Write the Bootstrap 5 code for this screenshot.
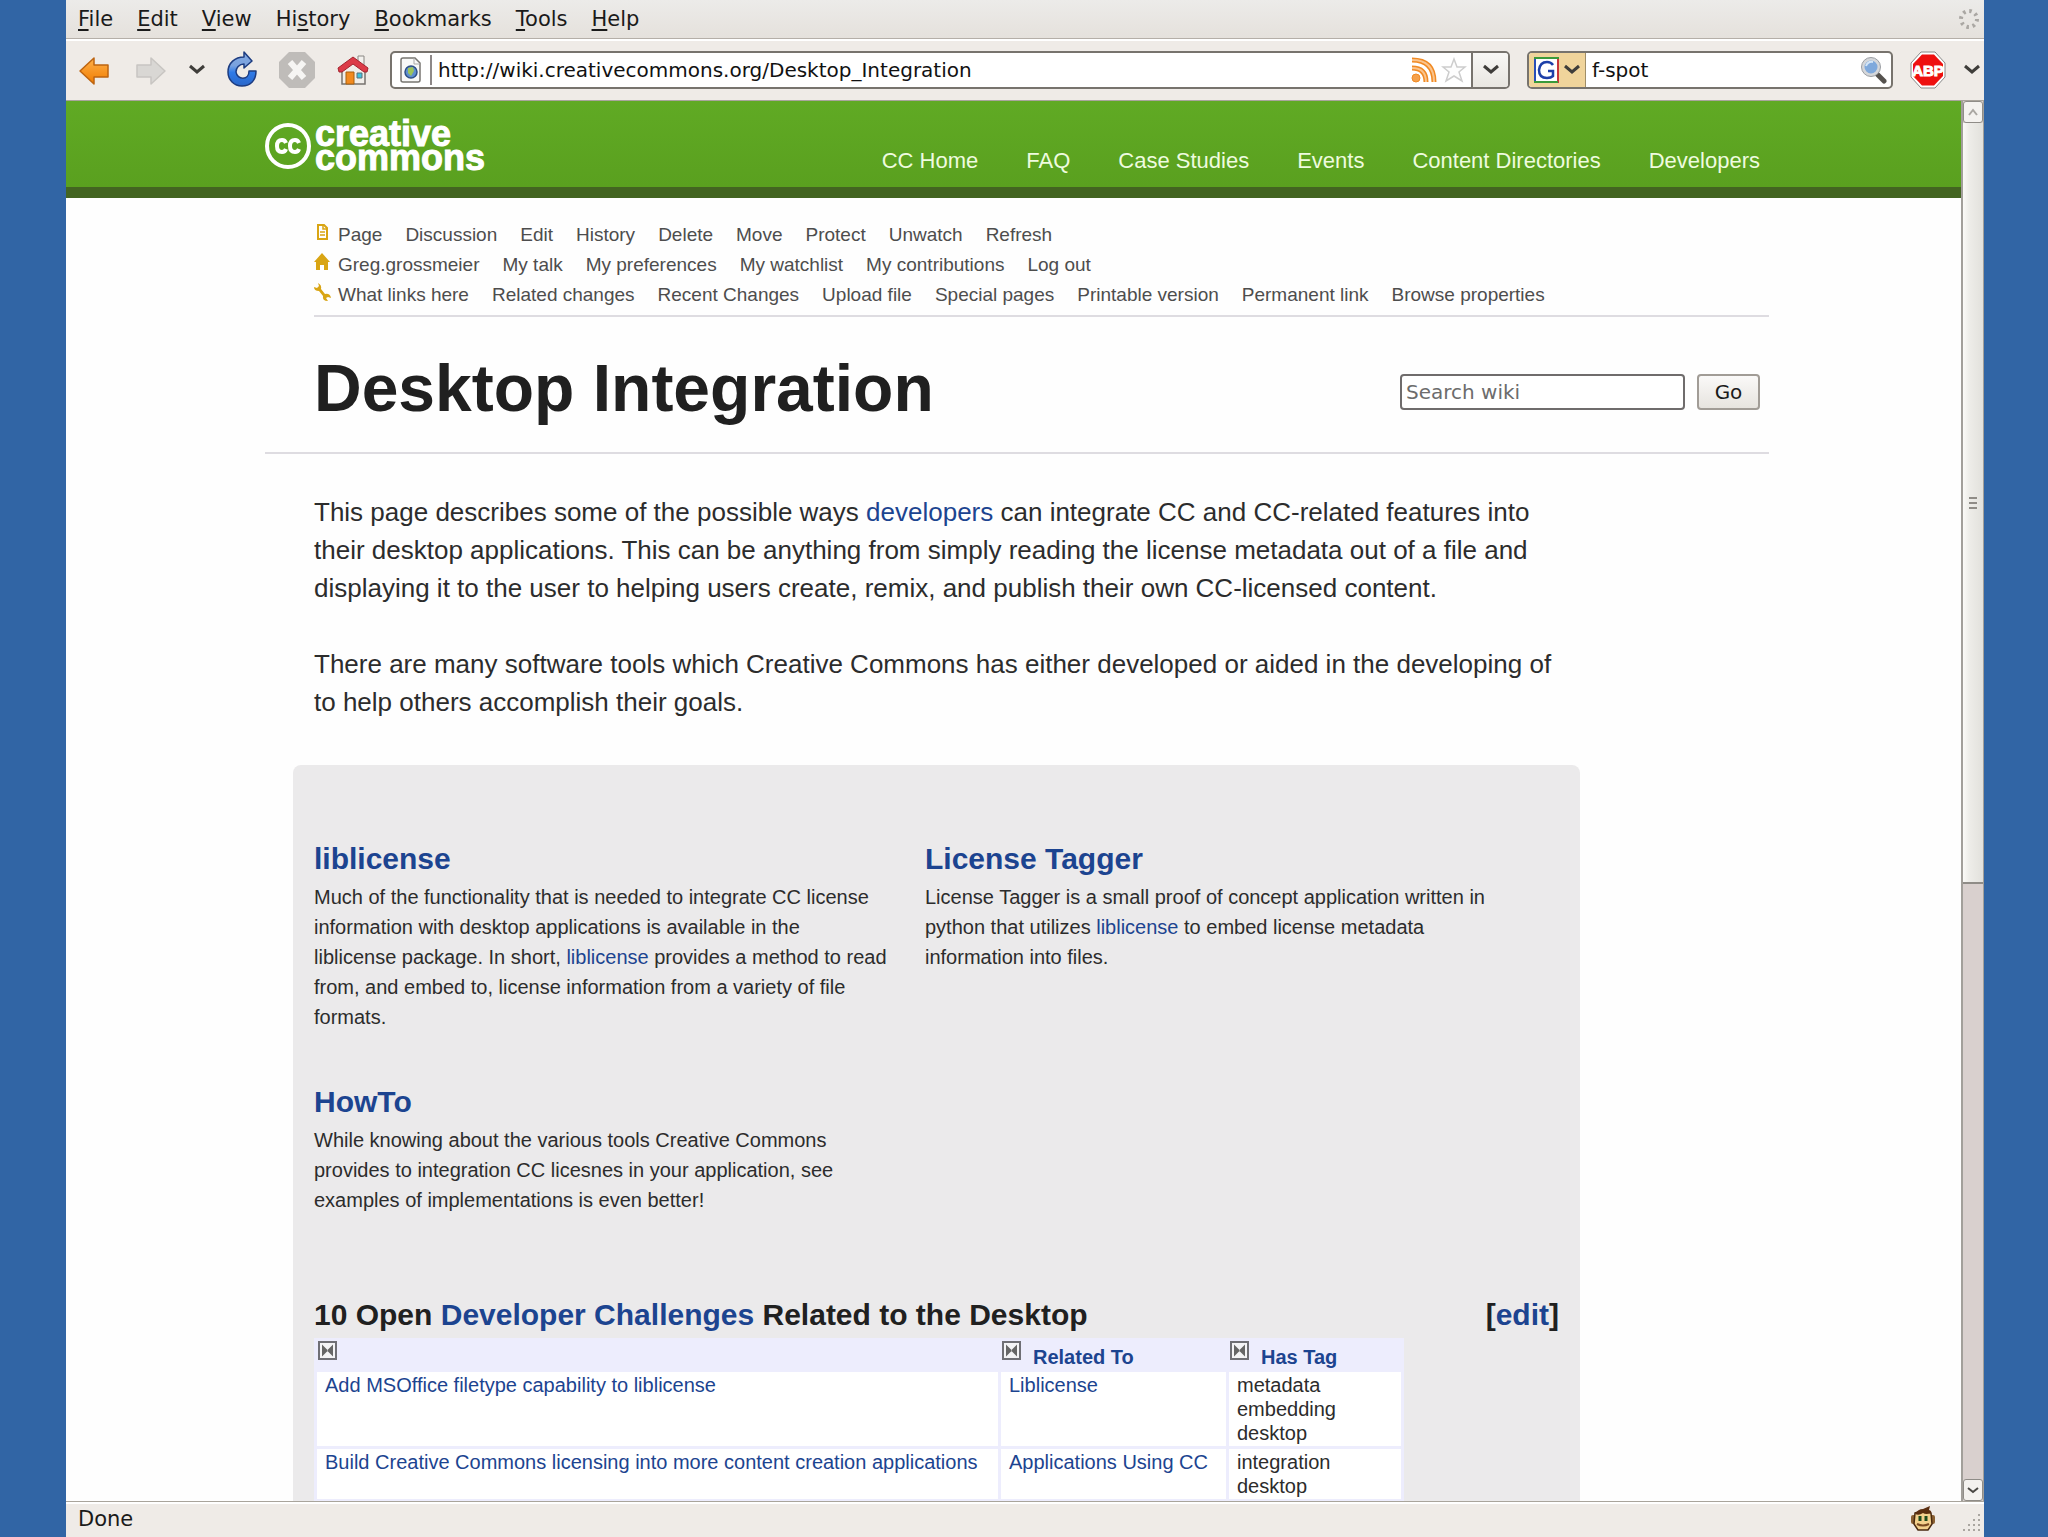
<!DOCTYPE html>
<html lang="en">
<head>
<meta charset="utf-8">
<meta name="viewport" content="width=device-width, initial-scale=1">
<title>Desktop Integration - CC Wiki</title>
<link href="https://cdn.jsdelivr.net/npm/bootstrap@5.3.0/dist/css/bootstrap.min.css" rel="stylesheet">
<style>
body{background:#3165a5;font-family:"Liberation Sans",Arial,sans-serif;color:#222;padding:0 64px 0 66px}
a{text-decoration:none;color:#1c4490}
button{border:0;background:none;padding:0;line-height:0}
svg{display:block;flex:none}
.ui-font{font-family:"DejaVu Sans",sans-serif;font-size:21px;line-height:24px;color:#1a1a1a}
.browser{background:#efebe7}
.menubar{height:38px;gap:24px;padding:0 4px 0 12px;background:linear-gradient(#ecebe9,#e5e1dc)}
.menubar button{line-height:24px;color:inherit}
.menubar u{text-underline-offset:3px}
.toolbar{height:63px;gap:20px;padding:0 3px 0 10px;border-top:1px solid #b5afa8;border-bottom:1px solid #a9a49c;box-shadow:inset 0 2px #fff}
.tool-end{gap:17px}
.field{height:38px;background:#fff;border:2px solid #77736d;border-radius:5px;overflow:hidden}
.field input{border:0;outline:0;background:none;min-width:0;color:#111;font-size:20px;padding:0 6px}
.site-id{width:40px;height:30px;border-right:2px solid #8d8888;padding-left:8px}
.drop{width:37px;border-left:2px solid #77736d;background:linear-gradient(#f8f7f5,#e9e6e1)}
.finder{width:366px}
.engine{width:57px;gap:4px;background:#f0d49b;border-right:1px solid #a08e68}
.viewport{min-height:0}
.wiki{background:#fefefe;overflow:hidden;min-width:0}
.banner{background:linear-gradient(#60aa24,#5aa01f);border-bottom:11px solid #436421;padding-left:7px}
.wrapper{max-width:1504px;margin:0 auto}
.banner .wrapper{height:86px}
.logo{gap:4px;color:#fff}
.logo-text{font-size:36px;line-height:24px;font-weight:700;-webkit-text-stroke:1px #fff}
.site-nav{gap:48px;font-size:22px;line-height:24px;padding:0 9px 14px 0}
.site-nav a{color:#eefbdf}
.body-area{padding-left:7px}
.actions{margin-left:49px;padding:22px 0 5px;border-bottom:2px solid #dedce1;font-size:19px;line-height:30px}
.actions ul{gap:23px}
.actions a{color:#4d4d4d}
.actions svg{margin-bottom:6px}
.actions .lead-icon{gap:8px}
.heading{padding:38px 9px 31px 49px;border-bottom:2px solid #dedce1}
.heading h1{font-size:66px;line-height:66px;font-weight:700;color:#202020}
.heading form{gap:12px}
.heading input{width:285px;height:36px;border:2px solid #6f6c6c;border-radius:4px;padding:0 4px;font-size:20px;background:#fff}
.heading input::placeholder{color:#6c6c6c;opacity:1}
.heading button{width:63px;height:36px;border:2px solid #a19c96;border-radius:4px;background:linear-gradient(#faf9f8,#e7e4df);font-size:20px}
.intro{padding:39px 0 44px 49px;max-width:1295px;font-size:26px;line-height:38px;color:#2c2c2c}
.intro p{margin:0 0 38px}
.intro p:last-child{margin:0}
.panel{margin:0 189px 0 28px;padding:76px 21px 40px;background:#ebeaeb;border-radius:8px 8px 0 0}
.panel h2,.panel h3{font-size:30px;line-height:36px;font-weight:700;margin:0 0 5px;color:#202020}
.tools-list{display:grid;grid-template-columns:588px 1fr;gap:52px 23px;font-size:20px;line-height:30px;color:#2c2c2c;margin-bottom:82px;padding-right:46px}
.tools-list p{margin:0}
.challenges{border-collapse:separate;border-spacing:3px;background:#ededfd;width:1090px;font-size:20px;line-height:24px;color:#2c2c2c}
.challenges th{padding:0 1px;vertical-align:top}
.challenges td{background:#fff;padding:1px 8px;vertical-align:top}
.sorter{gap:12px;height:28px}
.sorter a{padding-top:4px}
.scroll{width:23px;background:#d9d0ce;border-left:2px solid #a29f9a;border-right:1px solid #a29f9a}
.scroll button{height:22px;width:100%;border:1px solid #8f8c87;border-radius:3px;background:#f4f2ef}
.thumb{flex:759 0 0;background:linear-gradient(90deg,#fbfaf7,#eeede9 30%,#e2e1dc);border-bottom:2px solid #8f8c87}
.trough{flex:595 0 0}
.status{height:36px;border-top:1px solid #a9a49c;box-shadow:inset 0 2px #fff;padding:0 3px 2px 12px}
</style>
<script src="https://cdn.jsdelivr.net/npm/bootstrap@5.3.0/dist/js/bootstrap.bundle.min.js"></script>
</head>
<body>
<svg width="0" height="0" class="position-absolute" aria-hidden="true">
<defs>
<linearGradient id="or" x2="0" y2="1"><stop stop-color="#ffb04a"/><stop offset="1" stop-color="#f07c00"/></linearGradient>
<linearGradient id="bl" x2="0" y2="1"><stop stop-color="#84aae2"/><stop offset=".4" stop-color="#7aa2de"/><stop offset=".6" stop-color="#2f7be8"/><stop offset="1" stop-color="#2a66c8"/></linearGradient>
<symbol id="chev" viewBox="0 0 18 18"><path d="M2 5l7 6 7-6" fill="none" stroke="#3f3d3a" stroke-width="3"/></symbol>
<symbol id="sort" viewBox="0 0 19 19"><path d="M1 1h17v17H1z" fill="#f4f4f6" stroke="#6f6f75" stroke-width="2"/><path d="M4 3.500l6 6-6 6zM15 3.500l-6 6 6 6z" fill="#666"/></symbol>
</defs></svg>
<div class="browser d-flex flex-column vh-100">
  <div class="menubar ui-font d-flex align-items-center flex-shrink-0">
    <button><u>F</u>ile</button><button><u>E</u>dit</button><button><u>V</u>iew</button><button>Hi<u>s</u>tory</button><button><u>B</u>ookmarks</button><button><u>T</u>ools</button><button><u>H</u>elp</button>
    <svg class="ms-auto" width="22" height="22" viewBox="0 0 22 22" fill="none"><circle cx="11" cy="11" r="8" stroke="#aaa7a3" stroke-width="4" stroke-dasharray="2.500 3.783"/></svg>
  </div>
  <div class="toolbar d-flex align-items-center flex-shrink-0">
    <button aria-label="Back"><svg width="36" height="36" viewBox="0 0 36 36"><path d="M4 19L18 6v7h14v12H18v7z" fill="url(#or)" stroke="#bd6410" stroke-width="1.500" stroke-linejoin="round"/></svg></button>
    <button aria-label="Forward"><svg width="36" height="36" viewBox="0 0 36 36"><path d="M33 19L19 6v7H5v12h14v7z" fill="#d9d7d4" stroke="#c8c5c2" stroke-width="1.500" stroke-linejoin="round"/></svg></button>
    <button aria-label="Recent pages"><svg width="18" height="20"><use href="#chev"/></svg></button>
    <button aria-label="Reload"><svg width="32" height="38" viewBox="0 0 32 38"><path d="M18 1l8 9-8 7v-4c-5 0-8 4-8 8 1 8 13 9 13-1h7c0 10-6 15-14 15C8 35 2 29 2 21 2 12 9 6 18 6z" fill="url(#bl)" stroke="#1d3c80" stroke-width="1.500" stroke-linejoin="round"/></svg></button>
    <button aria-label="Stop"><svg width="38" height="38" viewBox="0 0 38 38"><path d="M11 1h16l10 10v16L27 37H11L1 27V11z" fill="#bfbcb9"/><path d="M12 11l14 16M26 11L12 27" stroke="#f6f5f3" stroke-width="6"/></svg></button>
    <button aria-label="Home"><svg width="34" height="36" viewBox="0 0 34 36"><path d="M22 4h6v11h-6z" fill="#f3f1ee" stroke="#8b8884"/><path d="M6 15l11-8 12 8v17H6z" fill="#f1eeea" stroke="#77736f" stroke-width="1.500"/><path d="M2 16L17 5l15 11-1 4h-3L17 12 6 20H3z" fill="#dc3b48" stroke="#a4242f" stroke-linejoin="round"/><path d="M10 20h8v12h-8z" fill="#f28a1f" stroke="#a8600f"/><path d="M21 21h5v5h-5z" fill="#3fc3de" stroke="#5a6f78"/></svg></button>
    <div class="tool-end d-flex align-items-center flex-grow-1">
      <div class="field d-flex align-items-center flex-grow-1">
        <div class="site-id d-flex align-items-center"><svg width="22" height="26" viewBox="0 0 22 26"><path d="M3 1h12l5 5v17q0 2-2 2H3q-2 0-2-2V3q0-2 2-2z" fill="#f8f8f7" stroke="#777570" stroke-width="1.500"/><path d="M14 1v6h6" fill="none" stroke="#aaa"/><circle cx="11" cy="15" r="6" fill="#5f8fd0" stroke="#2d4f86" stroke-width="1.500"/><path d="M8 11l5-1 1 4-3 5-3-3z" fill="#9cc45a"/></svg></div>
        <input class="ui-font flex-grow-1" aria-label="Address" value="http://wiki.creativecommons.org/Desktop_Integration">
        <svg class="me-1" width="26" height="26" viewBox="0 0 26 26" fill="none" stroke="#f08a24"><circle cx="5" cy="21" r="4" fill="#f5a04a"/><path d="M1 11q14 0 14 14M1 3q22 0 22 22" stroke-width="5"/><path d="M1 11q14 0 14 14M1 3q22 0 22 22" stroke-width="2" stroke="#fbc48c"/></svg>
        <svg class="me-1" width="26" height="26" viewBox="0 0 26 26"><path d="M13 2l3 8h8l-6 5 3 9-8-5-8 5 3-9-6-5h8z" fill="#fdfdfd" stroke="#cdcdcd" stroke-width="1.500"/></svg>
        <button class="drop h-100 d-flex align-items-center justify-content-center" aria-label="History list"><svg width="18" height="18"><use href="#chev"/></svg></button>
      </div>
      <div class="field finder d-flex align-items-center">
        <button class="engine h-100 d-flex align-items-center justify-content-center" aria-label="Search engine"><svg width="25" height="26" viewBox="0 0 25 26"><path d="M1 1h23v24H1z" fill="#fff"/><path d="M1 25V1" stroke="#2a4fb8" stroke-width="2"/><path d="M0 1h25" stroke="#3a9a3a" stroke-width="2"/><path d="M24 2v24" stroke="#c8373a" stroke-width="2"/><path d="M0 25h24" stroke="#3a9a3a" stroke-width="2"/><path d="M19 8Q17 5 13 5 6 5 5 13q0 8 8 8 4 0 6-2v-5h-5" fill="none" stroke="#1d3fa8" stroke-width="2.500"/></svg><svg width="18" height="18"><use href="#chev"/></svg></button>
        <input class="ui-font flex-grow-1" aria-label="Web search" value="f-spot">
        <button class="me-1" aria-label="Search"><svg width="26" height="28" viewBox="0 0 26 28"><path d="M15 17l8 8" stroke="#55524e" stroke-width="5" stroke-linecap="round"/><circle cx="10" cy="11" r="8" fill="#7fa9dc" stroke="#d5d7da" stroke-width="3"/><circle cx="10" cy="11" r="9.500" fill="none" stroke="#9a9da2"/><path d="M5 10q2-5 7-4" stroke="#d5e6f7" stroke-width="2" fill="none"/></svg></button>
      </div>
      <button aria-label="Adblock Plus"><svg width="36" height="38" viewBox="0 0 36 38"><path d="M11 1h14l10 11v14L25 37H11L1 26V12z" fill="#fff" stroke="#888"/><path d="M12 3.500h12l9 9.500v12l-9 9.500H12L3 25V13z" fill="#ee1010"/><text x="18" y="25" text-anchor="middle" font-family="Liberation Sans" font-weight="700" font-size="15" fill="#fff" stroke="#fff">ABP</text></svg></button>
      <button aria-label="Adblock menu"><svg width="18" height="18"><use href="#chev"/></svg></button>
    </div>
  </div>

  <div class="viewport d-flex flex-grow-1">
    <div class="wiki flex-grow-1">
      <header class="banner">
        <div class="wrapper d-flex justify-content-between align-items-end">
          <a class="logo d-flex align-items-center align-self-center pt-1" href="#">
            <svg width="46" height="48" viewBox="0 0 46 48"><circle cx="23" cy="24" r="21" fill="none" stroke="#fff" stroke-width="4"/><path d="M21 21q-1-3-4-3-5 0-5 6t5 6q3 0 4-3M34 21q-1-3-4-3-5 0-5 6t5 6q3 0 4-3" fill="none" stroke="#fff" stroke-width="4"/></svg>
            <span class="logo-text">creative<br>commons</span>
          </a>
          <nav class="site-nav d-flex"><a href="#">CC Home</a><a href="#">FAQ</a><a href="#">Case Studies</a><a href="#">Events</a><a href="#">Content Directories</a><a href="#">Developers</a></nav>
        </div>
      </header>
      <div class="body-area"><div class="wrapper">
        <nav class="actions">
          <ul class="list-unstyled d-flex m-0">
            <li class="lead-icon d-flex align-items-center"><svg width="16" height="18" viewBox="0 0 16 18"><path d="M4 2h6l3 3v11H4z" fill="#fff" stroke="#d9a514" stroke-width="2"/><path d="M9 2v4h4M6 9h5M6 12h5" stroke="#d9a514" stroke-width="1.500" fill="none"/></svg><a href="#">Page</a></li><li><a href="#">Discussion</a></li><li><a href="#">Edit</a></li><li><a href="#">History</a></li><li><a href="#">Delete</a></li><li><a href="#">Move</a></li><li><a href="#">Protect</a></li><li><a href="#">Unwatch</a></li><li><a href="#">Refresh</a></li>
          </ul>
          <ul class="list-unstyled d-flex m-0">
            <li class="lead-icon d-flex align-items-center"><svg width="16" height="18" viewBox="0 0 16 18"><path d="M8 0l8 9h-2v8h-4v-5H6v5H2V9H0z" fill="#d9a514"/></svg><a href="#">Greg.grossmeier</a></li><li><a href="#">My talk</a></li><li><a href="#">My preferences</a></li><li><a href="#">My watchlist</a></li><li><a href="#">My contributions</a></li><li><a href="#">Log out</a></li>
          </ul>
          <ul class="list-unstyled d-flex m-0">
            <li class="lead-icon d-flex align-items-center"><svg width="16" height="18" viewBox="0 0 16 18" overflow="visible"><path d="M4 0q4 2 3 6l4 5q5-1 6 4l-3-1-2 1 2 3q-6 0-5-5L5 8Q0 8 0 4l3 1 2-2z" fill="#d9a514"/></svg><a href="#">What links here</a></li><li><a href="#">Related changes</a></li><li><a href="#">Recent Changes</a></li><li><a href="#">Upload file</a></li><li><a href="#">Special pages</a></li><li><a href="#">Printable version</a></li><li><a href="#">Permanent link</a></li><li><a href="#">Browse properties</a></li>
          </ul>
        </nav>
        <div class="heading d-flex justify-content-between align-items-center">
          <h1 class="m-0">Desktop Integration</h1>
          <form class="d-flex mt-2"><input class="ui-font" type="text" placeholder="Search wiki" aria-label="Search wiki"><button class="ui-font" type="button">Go</button></form>
        </div>
        <div class="intro">
          <p>This page describes some of the possible ways <a href="#">developers</a> can integrate CC and CC-related features into their desktop applications. This can be anything from simply reading the license metadata out of a file and displaying it to the user to helping users create, remix, and publish their own CC-licensed content.</p>
          <p>There are many software tools which Creative Commons has either developed or aided in the developing of to help others accomplish their goals.</p>
        </div>
        <section class="panel">
          <div class="tools-list">
            <div><h3><a href="#">liblicense</a></h3><p>Much of the functionality that is needed to integrate CC license information with desktop applications is available in the<br>liblicense package. In short, <a href="#">liblicense</a> provides a method to read from, and embed to, license information from a variety of file formats.</p></div>
            <div><h3><a href="#">License Tagger</a></h3><p>License Tagger is a small proof of concept application written in python that utilizes <a href="#">liblicense</a> to embed license metadata information into files.</p></div>
            <div><h3><a href="#">HowTo</a></h3><p>While knowing about the various tools Creative Commons provides to integration CC licesnes in your application, see examples of implementations is even better!</p></div>
          </div>
          <h2 class="d-flex justify-content-between"><span>10 Open <a href="#">Developer Challenges</a> Related to the Desktop</span><span>[<a href="#">edit</a>]</span></h2>
          <table class="challenges">
            <colgroup><col style="width:681px"><col style="width:225px"><col></colgroup>
            <thead><tr>
              <th><div class="sorter d-flex align-items-start"><button aria-label="Sort by page"><svg width="19" height="19"><use href="#sort"/></svg></button></div></th>
              <th><div class="sorter d-flex align-items-start"><button aria-label="Sort by Related To"><svg width="19" height="19"><use href="#sort"/></svg></button><a href="#">Related To</a></div></th>
              <th><div class="sorter d-flex align-items-start"><button aria-label="Sort by Has Tag"><svg width="19" height="19"><use href="#sort"/></svg></button><a href="#">Has Tag</a></div></th>
            </tr></thead>
            <tbody>
              <tr><td><a href="#">Add MSOffice filetype capability to liblicense</a></td><td><a href="#">Liblicense</a></td><td>metadata<br>embedding<br>desktop</td></tr>
              <tr><td><a href="#">Build Creative Commons licensing into more content creation applications</a></td><td><a href="#">Applications Using CC</a></td><td>integration<br>desktop</td></tr>
            </tbody>
          </table>
        </section>
      </div></div>
    </div>
    <div class="scroll d-flex flex-column flex-shrink-0">
      <button class="d-flex align-items-center justify-content-center" aria-label="Scroll up"><svg width="12" height="12" viewBox="0 0 12 12"><path d="M2 9l4-5 4 5" fill="none" stroke="#aaa7a2" stroke-width="2"/></svg></button>
      <div class="thumb d-flex align-items-center justify-content-center"><svg width="8" height="12" viewBox="0 0 8 12"><path d="M0 1h8M0 6h8M0 11h8" stroke="#8f8c87" stroke-width="2"/></svg></div>
      <div class="trough"></div>
      <button class="d-flex align-items-center justify-content-center" aria-label="Scroll down"><svg width="12" height="12" viewBox="0 0 12 12"><path d="M1 4l5 4 5-4" fill="none" stroke="#4a4844" stroke-width="2"/></svg></button>
    </div>
  </div>

  <div class="status ui-font d-flex align-items-center justify-content-between flex-shrink-0">
    <span>Done</span>
    <span class="d-flex align-items-end">
      <button class="me-4" aria-label="Greasemonkey"><svg class="me-1" width="24" height="26" viewBox="0 0 24 26"><rect x="0" y="9" width="5" height="9" rx="2" fill="#8a6033"/><rect x="19" y="9" width="5" height="9" rx="2" fill="#8a6033"/><path d="M4 7q7-3 16 0l1 11-4 6H7l-4-6z" fill="#f3d08c" stroke="#4a2a10" stroke-width="1.500"/><path d="M4 8q3-5 8-5l7-3-1 4q3 1 2 3-5 2-8 0-4 3-8 1z" fill="#5b2e10"/><path d="M9 10v5M15 10v5" stroke="#1c4a1c" stroke-width="3"/><path d="M6 18q6 3 12 0" stroke="#7a4a20" stroke-width="2" fill="none"/></svg></button>
      <svg width="18" height="18" viewBox="0 0 18 18"><g fill="#aaa6a0"><path d="M15 0h2v2h-2zM10 5h2v2h-2zM15 5h2v2h-2zM5 10h2v2H5zM10 10h2v2h-2zM15 10h2v2h-2zM0 15h2v2H0zM5 15h2v2H5zM10 15h2v2h-2zM15 15h2v2h-2z"/></g></svg>
    </span>
  </div>
</div>
</body>
</html>
